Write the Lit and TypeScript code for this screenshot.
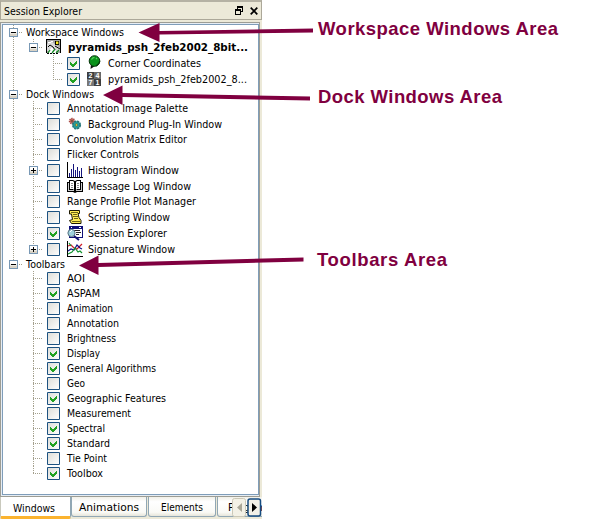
import { LitElement, html, svg, css, nothing } from "lit";
import { customElement } from "lit/decorators.js";

interface Row {
  text: string;
  width: number;
  level: number;
  height: number;
  lines: string[];
  toggle?: string;
  checked?: boolean;
  icon?: string;
  bold?: boolean;
}

/* Guide kinds: "v" full vertical, "t" branch, "l" last branch, "-" blank */
const group = (text: string, width: number, kind: string): Row => ({
  text, width, level: 0, height: 14, lines: [kind], toggle: "minus",
});

const dock = (text: string, width: number, icon = "", toggle = "", checked = false, last = false): Row => ({
  text, width, level: 1, height: icon ? 16 : 15, lines: ["v", last ? "l" : "t"], icon, toggle, checked,
});

const bar = (text: string, width: number, checked = false, last = false): Row => ({
  text, width, level: 1, height: 15, lines: ["-", last ? "l" : "t"], checked,
});

const ROWS: Row[] = [
  group("Workspace Windows", 98, "t"),
  { text: "pyramids_psh_2feb2002_8bit...", width: 180, level: 1, height: 16, lines: ["v", "l"], toggle: "minus", icon: "scene", bold: true },
  { text: "Corner Coordinates", width: 93, level: 2, height: 16, lines: ["v", "-", "t"], icon: "pin", checked: true },
  { text: "pyramids_psh_2feb2002_8...", width: 139, level: 2, height: 16, lines: ["v", "-", "l"], icon: "digits", checked: true },
  group("Dock Windows", 68, "t"),
  dock("Annotation Image Palette", 121),
  dock("Background Plug-In Window", 134, "gears"),
  dock("Convolution Matrix Editor", 120),
  dock("Flicker Controls", 72),
  dock("Histogram Window", 91, "histogram", "plus"),
  dock("Message Log Window", 103, "book"),
  dock("Range Profile Plot Manager", 129),
  dock("Scripting Window", 82, "script"),
  dock("Session Explorer", 79, "explorer", "", true),
  dock("Signature Window", 87, "signature", "plus", false, true),
  group("Toolbars", 39, "l"),
  bar("AOI", 18),
  bar("ASPAM", 33, true),
  bar("Animation", 46),
  bar("Annotation", 52),
  bar("Brightness", 49),
  bar("Display", 33, true),
  bar("General Algorithms", 89, true),
  bar("Geo", 18),
  bar("Geographic Features", 99, true),
  bar("Measurement", 64),
  bar("Spectral", 38, true),
  bar("Standard", 43, true),
  bar("Tie Point", 40),
  bar("Toolbox", 36, true, true),
];

const ICONS: Record<string, unknown> = {
  scene: svg`
    <path fill="#a8a8a8" d="M1 1h13v13H1z"/>
    <path fill="#d8d8d8" d="M1 5l4-3 5 4 4 3v3H1z"/>
    <path fill="#fff" d="M2 3h3v1H2zM5 2h2v1H5zM3 12l3-4 4 4v2H3z"/>
    <path fill="#000" d="M0 0h15v1H1v13H0zM14 1h1v13h-1zM9 2h4v4H9z"/><path fill="#ffef20" d="M10 2.500h2.400v2.600H10z"/>
    <path fill="none" stroke="#000" d="M2 8l2-2 3 2 2 3M9 7l5 3"/>
    <path fill="none" stroke="#178c25" stroke-width="1.300" d="M2 14l2-3M6 14l3-4M10 14l3-3"/>
    <path fill="none" stroke="#000" stroke-dasharray="2 1" d="M1 14.500h12"/>`,
  pin: svg`
    <path d="M4 9L3.500 14 8 11" fill="#111"/><circle cx="7.500" cy="6" r="5.300" fill="#0a921b" stroke="#06350a"/>
    <path d="M4.500 4.500Q5.500 2.500 7.500 2.300M9 3l1 1" stroke="#55d45d" stroke-width="1.200" fill="none"/>
    <path d="M9 11Q12.500 9 12.700 6" stroke="#063f0c" stroke-width="1.200" fill="none"/>`,
  digits: svg`
    <path fill="#3e3e3e" d="M0 1h7v7H0zM7 8h7v7H7z"/><path fill="#686868" d="M7 1h7v7H7z"/><path fill="#777" d="M0 8h7v7H0z"/>
    <g fill="#fff" font-family="Liberation Sans, sans-serif" font-size="7" font-weight="bold">
      <text x="1.500" y="7">2</text><text x="8.500" y="7">4</text><text x="1.500" y="14">7</text><text x="8.500" y="14">1</text></g>`,
  gears: svg`
    <circle cx="5" cy="5" r="2.400" fill="#c87064" stroke="#a84d49" stroke-width="1.700" stroke-dasharray="1.200 .7"/>
    <circle cx="5" cy="5" r="1" fill="#6f4c3a"/>
    <circle cx="9.500" cy="9" r="3.700" fill="#26a5a2" stroke="#28777c" stroke-width="1.800" stroke-dasharray="2.200 .7"/>
    <circle cx="9.500" cy="9" r="1.400" fill="#e9b62c" stroke="#12706e" stroke-width=".7"/>`,
  histogram: svg`<g shape-rendering="crispEdges"><path fill="#000" d="M0 0h1v16H0zM0 15h16v1H0z"/>
    <path fill="#15157e" d="M2 11h1v4H2zM4 7h1v8H4zM6 2h1v13H6zM8 8h1v7H8zM10 5h1v10h-1zM12 9h1v6h-1zM14 6h1v9h-1z"/></g>`,
  book: svg`
    <path fill="#000" d="M0 4h2V2h4l2 1 2-1h4v2h2v10h-6l-2 1-2-1H0z"/>
    <path fill="#fff" d="M3 3h3l1 1v8l-1-1H3zM9 4l1-1h3v8h-3l-1 1z"/>
    <path fill="#ccc" d="M1 5h1v7h5v1H1zM14 5h1v8H9v-1h5z"/>
    <path stroke="#888" d="M4 5.500h2M4 7.500h2M4 9.500h2M10 5.500h2M10 7.500h2M10 9.500h2"/>`,
  script: svg`
    <path fill="#ffed55" stroke="#1b1700" d="M2.500 1.500h10v3H11l1 4 2 3v3H4.500l-2-3 3-1-1-5.500h-2z"/>
    <path stroke="#6b6417" fill="none" d="M4 3.500h7M6 5.500h4M6 7.500h5M7 9.500h4M5 12.500h8"/>`,
  explorer: svg`
    <path fill="#101078" d="M2 1h14v12H2z"/><path fill="#fff" d="M3 4h12v8H3z"/>
    <path stroke="#222" d="M7 5.500h6M9 7.500h5M9 9.500h3"/><path stroke="#fff" d="M4 2.500h1M12 2.500h2"/>
    <circle cx="4.500" cy="8" r="3.600" fill="#9fd1dc" stroke="#557080"/><path d="M3 7l2-2" stroke="#fff"/>
    <path d="M7 11l5 4" stroke="#10106e" stroke-width="2"/>`,
  signature: svg`<path fill="#000" d="M0 0h1v16H0zM0 15h16v1H0z"/>
    <g fill="none" stroke-width="1.200"><path stroke="#d01f2a" d="M1 5l3-1 3 3 3 1 5-5"/>
    <path stroke="#10108a" d="M1 10l3-2 3 1 3-5 3 3 2 1"/><path stroke="#11952f" d="M1 13l4-2 3-4 3 4 2-1 2 2M2 2l2 3"/></g>`,
};

const label = (text: string, width: number, bold = false) => svg`
  <svg class="label" width=${width + 1} height="14">
    <text class=${bold ? "bold" : ""} x="0" y="11" textLength=${width} lengthAdjust="spacingAndGlyphs">${text}</text>
  </svg>`;

@customElement("app-root")
export class AppRoot extends LitElement {
  static styles = css`
    :host { display: block; position: relative; width: 590px; height: 519px; background: #fff; overflow: hidden; }
    * { box-sizing: border-box; }
    svg { display: block; flex: none; }
    .panel { width: 262px; height: 519px; background: #ece9d8; display: flex; flex-direction: column; }
    .title { height: 20px; margin-bottom: 2px; border: 1px solid #aca899; border-top: 2px solid #b5b2a4; display: flex; align-items: center; padding: 0 3px; }
    .title .label { margin-right: auto; }
    .buttons { display: flex; gap: 7px; align-items: center; }
    .frame { height: 475px; width: 260px; border: 1px solid #9d9d94; padding: 1px 0 1px 1px; background: #e6edf4; }
    .tree { height: 471px; width: 257px; border: 1px solid #7f9db9; background: #fff; overflow: hidden; }
    .label { overflow: visible; }
    .label text { font-family: "DejaVu Sans", sans-serif; font-size: 11.2px; fill: #000; }
    .label .bold { font-weight: bold; }
    .row { display: flex; align-items: flex-start; }
    .checkbox { margin-left: 4px; margin-top: 1px; }
    .tall .checkbox { margin-top: 2px; }
    .tall .text { margin-top: 1px; }
    .gap0 { margin-left: 3px; }
    .gap1 { margin-left: 7px; }
    .icon { margin-left: 7px; }
    .icon-node { margin-left: 3px; }
    .after-icon { margin-left: 5px; }
    .after-node { margin-left: 6px; }
    .tabs { height: 22px; display: flex; align-items: flex-start; position: relative; overflow: hidden; }
    .tab { height: 20px; border: 1px solid #91a7b4; border-top: 0; border-radius: 0 0 3px 3px; background: linear-gradient(#f1f0e8, #fff 25%, #fafaf6 80%, #e7e5da); display: flex; align-items: flex-start; padding-top: 3px; justify-content: center; flex: none; margin-right: 1px; }
    .tab.active { height: 22px; background: #fff; border-bottom: 3px solid #fbb32f; border-left-color: #c9c9bd; margin-right: 0; border-radius: 0 0 2px 2px; padding-top: 4px; padding-right: 3px; }
    .t0 { width: 71px; } .t1 { width: 76px; } .t2 { width: 68px; }
    .t3 { width: 70px; justify-content: flex-start; padding-left: 10px; }
    .scrollers { position: absolute; right: 0; top: 1px; display: flex; }
    .overlay { position: absolute; inset: 0; }
    .overlay text { font: bold 18.5px "Liberation Sans", sans-serif; }
  `;

  guide(kind: string, height: number, toggle: string) {
    const mid = Math.floor(height / 2);
    const dot = "#a39f8c";
    return svg`<svg width="20" height=${height} shape-rendering="crispEdges">
      ${kind === "-" ? nothing : svg`<path fill="none" stroke=${dot} stroke-dasharray="1 1"
        d="M10.500 0V${kind === "l" ? mid : height}"/>`}
      ${kind === "t" || kind === "l" ? svg`<path fill="none" stroke=${dot} stroke-dasharray="1 1" d="M10 ${mid + 0.5}H19"/>` : nothing}
      ${toggle ? svg`<g transform="translate(6 ${mid - 4})">
        <path fill="#fff" stroke="#7898b5" d="M.5 .5h8v8h-8z"/><path fill="#d8d2c5" d="M1 6h7v2H1z"/><path fill="#ece9e2" d="M1 4h7v2H1z"/>
        <path fill="#000" d="M2 4h5v1H2z"/>${toggle === "plus" ? svg`<path fill="#000" d="M4 2h1v5H4z"/>` : nothing}</g>` : nothing}
    </svg>`;
  }

  row(r: Row) {
    const node = r.level === 1 && r.checked === undefined;
    const gap = r.level === 0 ? "gap0" : r.icon ? (node ? "after-node" : "after-icon") : "gap1";
    return html`<div class="row ${r.height === 16 ? "tall" : ""}" style="height:${r.height}px">
      ${r.lines.map((k, n) => this.guide(k, r.height, n === r.level ? r.toggle ?? "" : ""))}
      ${r.checked === undefined ? nothing : html`<svg class="checkbox" width="13" height="13">
        <defs><linearGradient id="shade" x1="0" y1="0" x2="1" y2="1"><stop stop-color="#dcdcd7"/><stop offset="1" stop-color="#fff"/></linearGradient></defs>
        <path fill="url(#shade)" stroke="#1d5281" d="M.5 .5h12v12H.5z"/>
        ${r.checked ? svg`<path shape-rendering="crispEdges" fill="#21a121" d="M3 5v3l2 2h1l4-4V3L5.500 7.500z"/>` : nothing}
      </svg>`}
      ${r.icon ? html`<svg class=${node ? "icon-node" : "icon"} width="16" height="16">${ICONS[r.icon]}</svg>` : nothing}
      <div class="text ${gap}">${label(r.text, r.width, r.bold)}</div>
    </div>`;
  }

  render() {
    return html`
      <div class="panel">
        <div class="title">${label("Session Explorer", 78)}
          <div class="buttons">
            <svg width="8" height="9" shape-rendering="crispEdges"><path d="M2 0h6v6H6V5h1V2H3v1H2zM0 3h6v6H0zM1 5v3h4V5z" fill-rule="evenodd"/></svg>
            <svg width="8" height="8"><path d="M.7 .7l6.600 6.600M7.300 .7L.7 7.300" stroke="#000" stroke-width="1.700"/></svg>
          </div>
        </div>
        <div class="frame"><div class="tree">${ROWS.map((r) => this.row(r))}</div></div>
        <div class="tabs">
          <div class="tab active t0">${label("Windows", 42)}</div>
          <div class="tab t1">${label("Animations", 60)}</div>
          <div class="tab t2">${label("Elements", 42)}</div>
          <div class="tab t3">${label("Plug-In", 35)}</div>
          <div class="scrollers">
            <svg width="15" height="19"><rect x=".5" y=".5" width="13" height="18" rx="2" fill="#f3f1e6" stroke="#cbc8b7"/><path d="M10 5v9L5 9.500z" fill="#aaa797"/></svg>
            <svg width="15" height="19"><rect x="1" y="1" width="12.500" height="17" rx="2" fill="#f2f0e7" stroke="#164b80" stroke-width="1.500"/><path d="M5 5v9l5-4.500z"/></svg>
          </div>
        </div>
      </div>
      <svg class="overlay" width="590" height="519">
        <g fill="#800040" stroke="none">
          <path d="M138.500 32.500L159.500 23v8L313 28.500v4L159.500 34.500V42z"/>
          <path d="M103 95L122.500 85.500v7.500L310 96.500v4L122.500 97v8z"/>
          <path d="M79 265.500L98.500 255.500v7.500L303.500 257.500v4L98.500 267v8z"/>
          <text x="318" y="34.500" textLength="240">Workspace Windows Area</text>
          <text x="318" y="102.500" textLength="184">Dock Windows Area</text>
          <text x="317" y="265.500" textLength="130">Toolbars Area</text>
        </g>
      </svg>`;
  }
}
